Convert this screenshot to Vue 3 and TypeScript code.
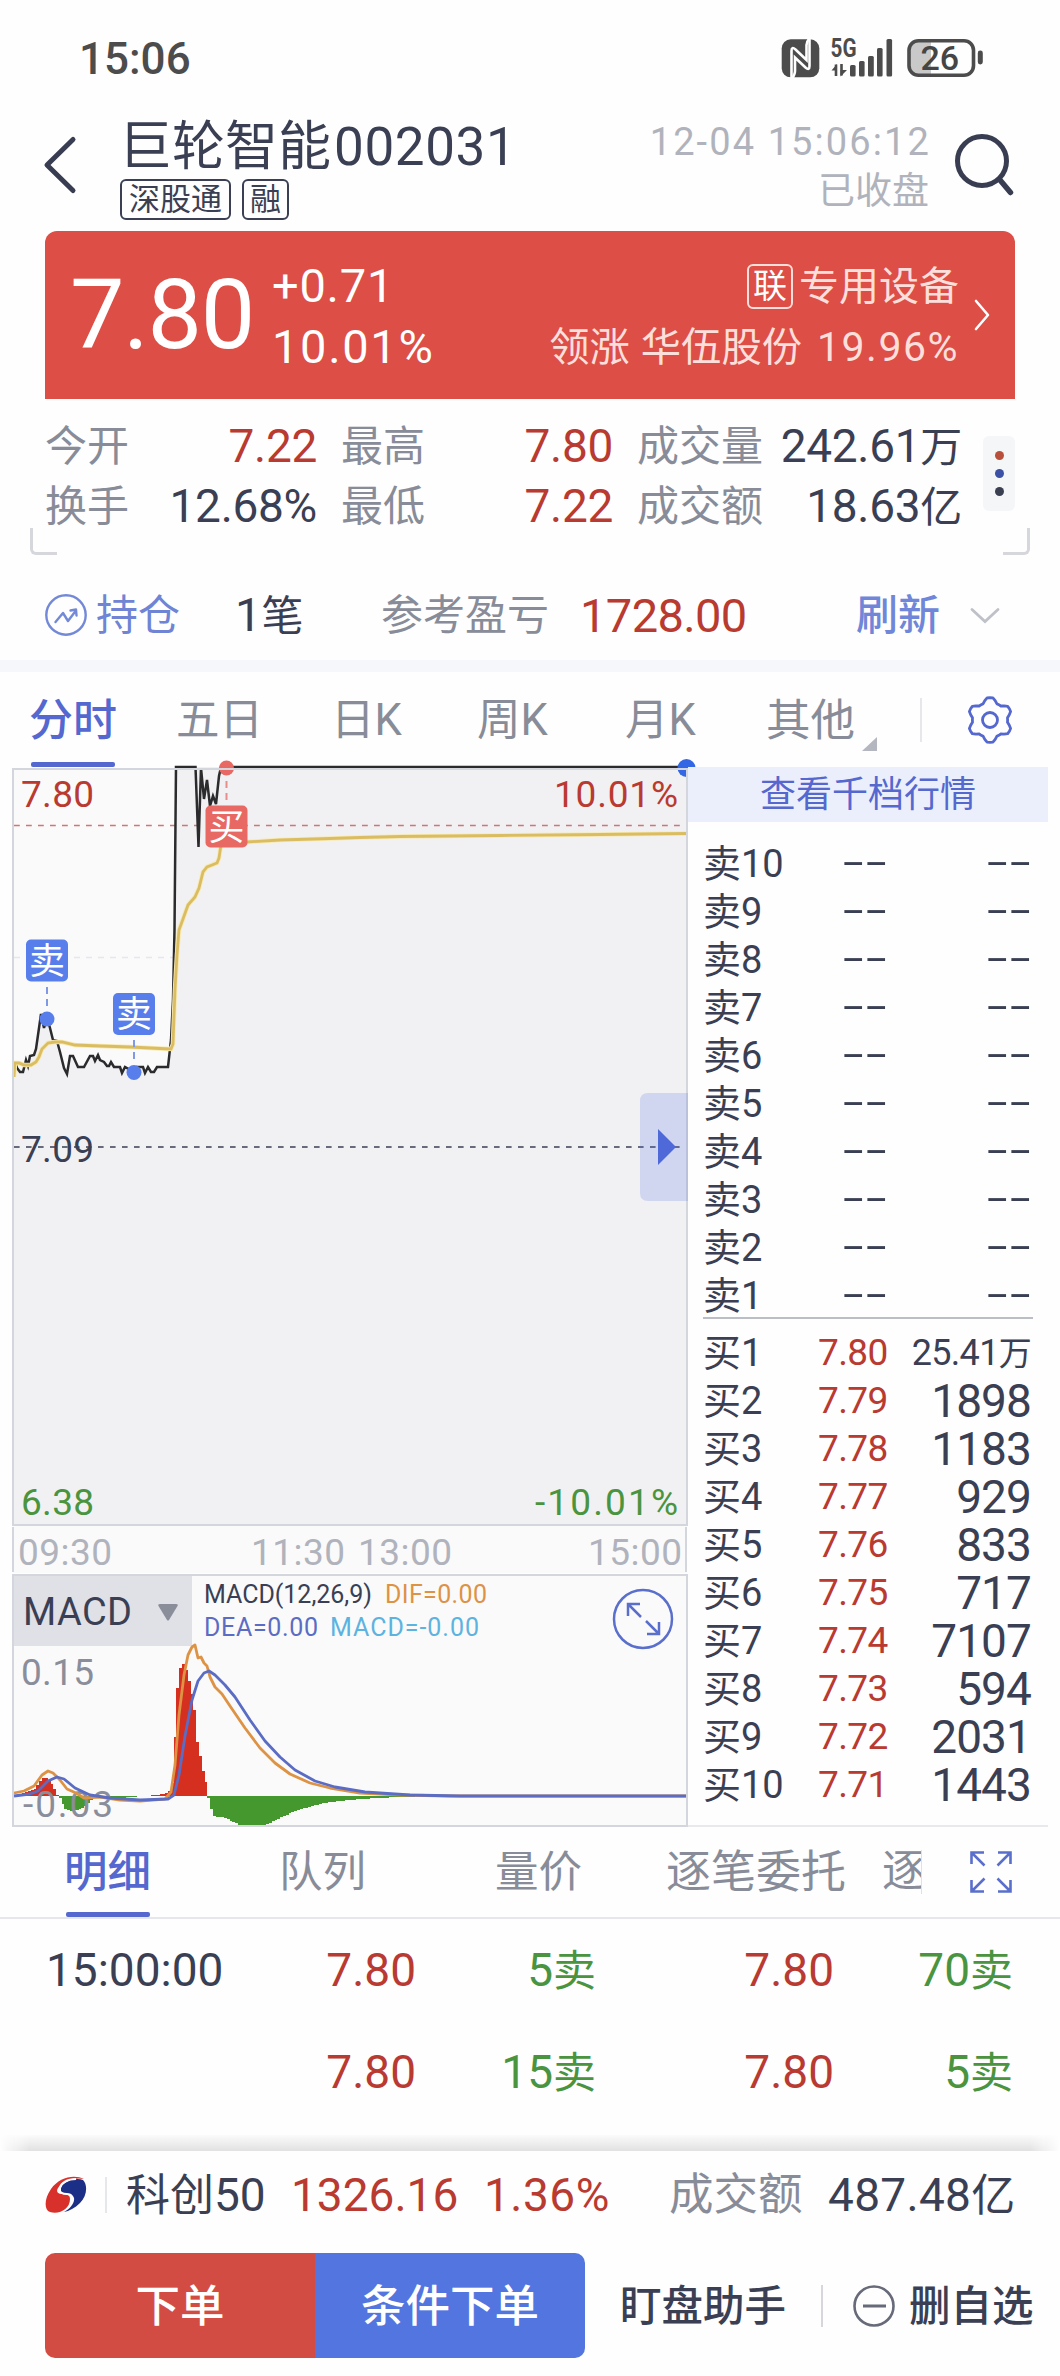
<script setup lang="ts">
interface Level { name: string; price: string; vol: string; small?: boolean }
interface Bar { x: number; y: number; h: number; up: boolean }

const sells: string[] = ['10', '9', '8', '7', '6', '5', '4', '3', '2', '1']
const buys: Level[] = [
  { name: '买1', price: '7.80', vol: '25.41', small: true },
  { name: '买2', price: '7.79', vol: '1898' },
  { name: '买3', price: '7.78', vol: '1183' },
  { name: '买4', price: '7.77', vol: '929' },
  { name: '买5', price: '7.76', vol: '833' },
  { name: '买6', price: '7.75', vol: '717' },
  { name: '买7', price: '7.74', vol: '7107' },
  { name: '买8', price: '7.73', vol: '594' },
  { name: '买9', price: '7.72', vol: '2031' },
  { name: '买10', price: '7.71', vol: '1443' },
]

const deals = [
  { time: '15:00:00', p1: '7.80', v1: '5', p2: '7.80', v2: '70' },
  { time: '', p1: '7.80', v1: '15', p2: '7.80', v2: '5' },
]

// intraday price and average price
const open =
  '14,1071 15,1062 17,1068 20,1072 23,1072 26,1060 28,1066 30,1056 34,1055 36,1049 38,1035 41,1014 44,1028 47,1018 50,1028 53,1040 57,1041 60,1052 64,1068 67,1074 70,1056 73,1056 78,1067 84,1067 90,1056 93,1056 95,1061 98,1055 100,1060 104,1062 107,1066 109,1066 111,1062 114,1067 120,1067 122,1073 125,1067 134,1072 137,1067 143,1067 145,1073 148,1067 151,1072 154,1072 157,1067 168,1067 171,1040 173,1000 174.5,930 176,767'
const price =
  open + ' 195.5,767 198.5,847 201,768 204,799 207,780 210,806 213,796 216,804 219,776 221,767 687,767'
const area = open + ' 687,767 687,1525 14,1525'
const average =
  '14,1077 15,1063 19,1063 24,1065 31,1065 36,1062 39,1057 42,1049 48,1043 55,1042 62,1042 75,1045 100,1046 130,1047 160,1048.5 171,1049 173,1044 175,990 177,955 179,930 183,919 188,905 195,897 199,888 203,872 207,867 212,865 217,863 219,858 221,845 232,842.5 247,842 280,840 330,838.5 360,837.5 400,836.5 500,835.5 600,834.5 686,833.5'

const dif =
  '14,1793 24,1791 34,1786 42,1775 48,1771 53,1773 60,1780 67,1789 76,1793 84,1798 100,1797 120,1800 140,1801 165,1799 171,1792 175,1765 179,1715 184,1675 188,1655 192,1647 195,1645 198,1658 201,1657 204,1663 207,1666 210,1677 215,1687 222,1694 230,1706 245,1728 260,1748 275,1763 290,1774 310,1783 330,1788 360,1793 400,1795 450,1796 686,1796'
const dea =
  '14,1796 30,1794 38,1791 48,1781 57,1777 64,1779 75,1788 90,1795 110,1798 140,1800 168,1799 174,1795 179,1775 185,1736 192,1700 198,1681 204,1673 209,1671 215,1675 225,1685 235,1697 250,1720 265,1741 280,1757 295,1770 315,1781 335,1787 365,1792 410,1795 460,1796 686,1796'

const ZERO = 1796
const STEP = 2.8
const hist: [number, number][] = [
  [14, 1796], [22, 1794], [30, 1791], [36, 1788], [40, 1782], [44, 1777], [48, 1778], [52, 1784], [56, 1792],
  [58, 1796], [61, 1799], [65, 1809], [70, 1811], [78, 1810], [86, 1806], [92, 1799], [98, 1797], [120, 1798],
  [138, 1796.5], [152, 1795.5], [162, 1794], [168, 1793], [171, 1788], [174, 1775], [175.6, 1714], [178.4, 1681],
  [181.2, 1665], [184, 1664], [186.8, 1672], [189.6, 1684], [192.4, 1697], [195.2, 1714], [198, 1750],
  [200.8, 1758], [203.6, 1775], [206.4, 1784], [208, 1796], [210, 1803], [212, 1811], [214.5, 1817],
  [222, 1817], [230, 1820], [240, 1825], [265, 1825], [278, 1819], [295, 1811], [312, 1806], [330, 1802],
  [360, 1799], [400, 1797], [430, 1796],
]
const bars: Bar[] = []
for (let x = 14; x < 430; x += STEP) {
  const c = x + STEP / 2
  const i = hist.findIndex((p) => p[0] > c)
  if (i < 1) continue
  const [x0, y0] = hist[i - 1]
  const [x1, y1] = hist[i]
  const y = y0 + ((y1 - y0) * (c - x0)) / (x1 - x0)
  bars.push({ x, y: Math.min(y, ZERO), h: Math.abs(y - ZERO), up: y < ZERO })
}

const gear = Array.from({ length: 49 }, (_, k) => {
  const a = (k / 48) * Math.PI * 2
  const r = 20 + 2.4 * Math.tanh(3 * Math.cos(6 * a))
  return `${(25 + r * Math.sin(a)).toFixed(1)},${(25 - r * Math.cos(a)).toFixed(1)}`
}).join(' ')
</script>

<template>
  <div class="page">
    <div class="status">
      <span class="clock">15:06</span>
      <svg class="sys" width="202" height="40" viewBox="781 38 202 40">
        <rect x="781.7" y="39.3" width="37.6" height="38" rx="9" fill="#4c4c4c" />
        <path d="M791.500 78.500V51q0-5 4-1.500l11 10.500V45q0-3 3-7" fill="none" stroke="#fff" stroke-width="2.600" />
        <path d="M809.500 38V66q0 5-4 1.500l-10.500-10V71q0 3-3 8" fill="none" stroke="#fff" stroke-width="2.600" />
        <text x="830.500" y="57" class="g5" textLength="26" lengthAdjust="spacingAndGlyphs">5G</text>
        <path d="M836 64.500v11.500M841.500 64v11.500" stroke="#4c4c4c" stroke-width="2.600" fill="none" />
        <path d="M831.500 70.500l5.500-6.500v6.500zM840.500 70h6.500l-6.500 6.500z" fill="#4c4c4c" />
        <g fill="#4c4c4c">
          <rect x="850" y="65" width="5.600" height="11.500" rx="1.500" />
          <rect x="859" y="61" width="5.600" height="15.500" rx="1.500" />
          <rect x="868" y="56" width="5.800" height="20.500" rx="1.500" />
          <rect x="877" y="48" width="5.600" height="28.500" rx="1.500" />
          <rect x="886.500" y="39" width="5.600" height="37.500" rx="1.500" />
        </g>
        <path d="M931 41h-13q-9 0-9 9v16q0 9 9 9h13z" fill="#c9c9c9" />
        <rect x="909" y="40.800" width="64.500" height="34.500" rx="9.500" fill="none" stroke="#4c4c4c" stroke-width="3.600" />
        <rect x="977.800" y="50.500" width="5" height="14" rx="2.400" fill="#4c4c4c" />
        <text x="920.500" y="70" class="bat" textLength="38.500">26</text>
      </svg>
    </div>

    <header class="head">
      <svg class="back" width="36" height="60" viewBox="0 0 36 60">
        <path d="M31 4.500L5 30l26 25.500" fill="none" stroke="#383d52" stroke-width="5" stroke-linecap="round" stroke-linejoin="round" />
      </svg>
      <div class="name">
        <div class="title"><span class="cn">巨轮智能</span><span>002031</span></div>
        <div class="tags"><span>深股通</span><span>融</span></div>
      </div>
      <div class="when">
        <div class="dt">12-04 15:06:12</div>
        <div class="closed">已收盘</div>
      </div>
      <svg class="search" width="62" height="64" viewBox="0 0 62 64">
        <circle cx="29" cy="29" r="24.500" fill="none" stroke="#383d52" stroke-width="5" />
        <path d="M47 48L57.500 60.500" stroke="#383d52" stroke-width="5.500" stroke-linecap="round" />
      </svg>
    </header>

    <section class="card">
      <div class="big">7.80</div>
      <div class="chg"><div>+0.71</div><div class="pc">10.01%</div></div>
      <div class="sector">
        <div class="l1"><span class="lian">联</span>专用设备</div>
        <div class="l2">领涨 华伍股份 <span class="spc">19.96%</span></div>
      </div>
      <svg class="go" width="18" height="32" viewBox="0 0 18 32">
        <path d="M3 2l12 14L3 30" fill="none" stroke="#fff" stroke-width="2.600" stroke-linecap="round" stroke-linejoin="round" />
      </svg>
    </section>

    <section class="stats">
      <div class="grid">
        <span class="k">今开</span><span class="v red">7.22</span>
        <span class="k">最高</span><span class="v red">7.80</span>
        <span class="k">成交量</span><span class="v">242.61<i>万</i></span>
        <span class="k">换手</span><span class="v">12.68%</span>
        <span class="k">最低</span><span class="v red">7.22</span>
        <span class="k">成交额</span><span class="v">18.63<i>亿</i></span>
      </div>
      <div class="more"><b class="d1"></b><b class="d2"></b><b class="d3"></b></div>
      <i class="corner cl"></i><i class="corner cr"></i>
    </section>

    <section class="hold">
      <svg width="44" height="44" viewBox="0 0 44 44" fill="none" stroke="#7389d8" stroke-width="2.400">
        <circle cx="22" cy="22" r="19.700" />
        <path d="M11.500 29l7.500-9 5 8 8-10.500M26.500 17.500l5.500-1 .5 6" stroke-linejoin="round" stroke-linecap="round" />
      </svg>
      <span class="hk">持仓</span>
      <span class="hn">1<i>笔</i></span>
      <span class="hp">参考盈亏</span>
      <span class="hv red">1728.00</span>
      <span class="hr">刷新</span>
      <svg class="hd" width="32" height="18" viewBox="0 0 32 18"><path d="M3 3.500l13 12 13-12" fill="none" stroke="#bfc1c9" stroke-width="2.800" stroke-linecap="round" /></svg>
    </section>
    <div class="band"></div>

    <nav class="tabs">
      <span class="t0 on">分时</span><span class="t1">五日</span><span class="t2">日K</span><span class="t3">周K</span>
      <span class="t4">月K</span><span class="t5">其他</span>
      <svg class="tri" width="15" height="14"><path d="M15 0v14H0z" fill="#b4b7bf" /></svg>
      <i class="sep"></i>
      <svg class="gear" width="50" height="50" viewBox="0 0 50 50" fill="none" stroke="#5468cf" stroke-width="2.800" stroke-linejoin="round">
        <polygon :points="gear" /><circle cx="25" cy="25" r="7.500" />
      </svg>
    </nav>

    <main class="main">
      <div class="left">
        <svg class="chart" width="688" height="807" viewBox="0 767 688 807">
          <rect x="13" y="769" width="674" height="756" fill="#fafafb" />
          <path d="M14 957.500H686" stroke="#e7e7ea" stroke-width="1.500" stroke-dasharray="6 6" />
          <polygon :points="area" fill="#f1f1f4" />
          <path d="M14 825.500H686" stroke="#d0766d" stroke-width="1.600" stroke-dasharray="5.800 6.200" />
          <polyline :points="price" fill="none" stroke="#2b2b2d" stroke-width="2.500" />
          <polyline :points="average" fill="none" stroke="#f8e9b0" stroke-width="4.600" />
          <polyline :points="average" fill="none" stroke="#dabd62" stroke-width="2.800" />
          <path d="M14 1147H686" stroke="#676a7b" stroke-width="2" stroke-dasharray="5.600 6.400" />

          <circle cx="226.500" cy="768" r="7.500" fill="#e86963" />
          <circle cx="686.500" cy="768" r="9" fill="#3467e4" />
          <rect x="13" y="769" width="674" height="756" fill="none" stroke="#d4d6dd" stroke-width="2" />

          <path d="M226.500 781v20" stroke="#e88d89" stroke-width="2" stroke-dasharray="7 5" />
          <rect x="205.500" y="805.500" width="42" height="42" rx="5" fill="#e86963" />
          <text x="226.500" y="839.500" class="mk">买</text>
          <circle cx="47" cy="1019" r="7.500" fill="#587eec" />
          <path d="M47 987v20" stroke="#7f99e6" stroke-width="2" stroke-dasharray="7 5" />
          <rect x="26" y="939.500" width="42" height="42" rx="5" fill="#587eec" />
          <text x="47" y="973.500" class="mk">卖</text>
          <circle cx="134" cy="1072.500" r="7.500" fill="#587eec" />
          <path d="M134 1040v20" stroke="#7f99e6" stroke-width="2" stroke-dasharray="7 5" />
          <rect x="113" y="993" width="42" height="42" rx="5" fill="#587eec" />
          <text x="134" y="1027" class="mk">卖</text>

          <g class="lb">
            <text x="21" y="806.500" fill="#b93a30" textLength="73">7.80</text>
            <text x="554" y="806.500" fill="#b93a30" textLength="124">10.01%</text>
            <text x="21" y="1161.500" fill="#3a3f54" textLength="73">7.09</text>
            <text x="21" y="1515" fill="#4a9440" textLength="73">6.38</text>
            <text x="535" y="1515" fill="#4a9440" textLength="143">-10.01%</text>
          </g>
          <path d="M688 1093h-40q-8 0-8 8v92q0 8 8 8h40z" fill="#5470e0" fill-opacity=".2" />
          <path d="M658 1129l18 18-18 18z" fill="#5069d8" />

          <rect x="13" y="1526" width="674" height="47" fill="#fafafb" />
          <path d="M13 1527v45M686 1527v45" stroke="#d4d6dd" stroke-width="2" />
          <g class="lb" fill="#b0b3bc">
            <text x="18" y="1565" textLength="94">09:30</text>
            <text x="251" y="1565" textLength="94">11:30</text>
            <text x="358" y="1565" textLength="94">13:00</text>
            <text x="588" y="1565" textLength="94">15:00</text>
          </g>
        </svg>
        <svg class="macd" width="688" height="253" viewBox="0 1574 688 253">
          <rect x="13" y="1575" width="674" height="251" fill="#fafafb" />
          <rect x="14" y="1576" width="178" height="70" fill="#e0e1e6" />
          <g shape-rendering="crispEdges">
            <rect v-for="b in bars" :key="b.x" :x="b.x" :y="b.y" width="3" :height="b.h" :fill="b.up ? '#d52f20' : '#45982d'" />
          </g>
          <text x="23" y="1817" class="mt" textLength="90">-0.03</text>
          <polyline :points="dif" fill="none" stroke="#dd9244" stroke-width="2.800" stroke-linejoin="round" />
          <polyline :points="dea" fill="none" stroke="#5a6cc4" stroke-width="2.800" stroke-linejoin="round" />
          <text x="21" y="1685" class="mt" textLength="73">0.15</text>
          <text x="23" y="1625" class="sel" textLength="109">MACD</text>
          <path d="M160 1604h16q2.500 0 1.500 2l-8.500 14q-1 1-2 0l-8.500-14q-1-2 1.500-2z" fill="#8a8d9a" />
          <g class="lg">
            <text x="204" y="1603" fill="#3a3f54" textLength="168">MACD(12,26,9)</text>
            <text x="385" y="1603" fill="#dd9244" textLength="102">DIF=0.00</text>
            <text x="204" y="1636" fill="#5a6cc4" textLength="114">DEA=0.00</text>
            <text x="330" y="1636" fill="#5db3e0" textLength="149">MACD=-0.00</text>
          </g>
          <g fill="none" stroke="#5a6fcb" stroke-width="2.500">
            <circle cx="643" cy="1619" r="29" />
            <path d="M641 1617L628.500 1604.500M640 1604H628v12M646 1621l12 12M647 1634h12v-12" />
          </g>
          <rect x="13" y="1575" width="674" height="251" fill="none" stroke="#d4d6dd" stroke-width="2" />
        </svg>
      </div>
      <div class="book">
        <div class="bh">查看千档行情</div>
        <div class="sells">
          <div v-for="s in sells" :key="s" class="brow">
            <span class="bn">卖{{ s }}</span><span class="dash a"><em>--</em></span><span class="dash"><em>--</em></span>
          </div>
        </div>
        <div class="buys">
          <div v-for="b in buys" :key="b.name" class="brow">
            <span class="bn">{{ b.name }}</span><span class="bp red">{{ b.price }}</span>
            <span class="bv" :class="{ sm: b.small }">{{ b.vol }}<i v-if="b.small">万</i></span>
          </div>
        </div>
      </div>
    </main>

    <nav class="tabs2">
      <span class="s0 on">明细</span><span class="s1">队列</span><span class="s2">量价</span>
      <span class="s3">逐笔委托</span><span class="s4">逐</span>
      <svg class="exp" width="44" height="44" viewBox="0 0 44 44" fill="none" stroke="#5a6fcb" stroke-width="2.600">
        <path d="M15 2.500H2.500V14M2.500 2.500l13 13M29 2.500h12.500V14M41.500 2.500l-13 13M15 41.500H2.500V30M2.500 41.500l13-13M29 41.500h12.500V30M41.500 41.500l-13-13" />
      </svg>
    </nav>

    <section class="deals">
      <div v-for="(d, i) in deals" :key="i" class="deal">
        <span class="tm">{{ d.time }}</span>
        <span class="red">{{ d.p1 }}</span>
        <span class="grn">{{ d.v1 }}<i>卖</i></span>
        <span class="red">{{ d.p2 }}</span>
        <span class="grn">{{ d.v2 }}<i>卖</i></span>
      </div>
    </section>
    <div class="shade"></div>

    <footer>
      <div class="index">
        <svg width="42" height="38" viewBox="0 0 42 38">
          <path d="M39 3C28-2 14 2 6 13-1 23-1 34 5 36c9 3 20-3 20-13 0-5-5-5-8-5-5 0-6-3-4-6C17 5 29 1 39 3z" fill="#d8302a" />
          <path d="M38 4c5 5 4 16-3 23-5 5-11 8-16 9 6-3 11-9 10-14-1-4-5-3-9-4-4 0-7-3-4-7C20 5 31 1 38 4z" fill="#1c2f86" />
          <path d="M31 3c-9 0-15 4-16 9-1 5 3 6 7 6 5 0 6 3 4 8" fill="none" stroke="#fff" stroke-width="2" />
        </svg>
        <i class="isep"></i>
        <span class="in"><i>科创</i>50</span>
        <span class="iv red">1326.16</span>
        <span class="ip red">1.36%</span>
        <span class="ik">成交额</span>
        <span class="ia">487.48<i>亿</i></span>
      </div>
      <div class="acts">
        <div class="btn r">下单</div><div class="btn b">条件下单</div>
        <span class="help">盯盘助手</span>
        <i class="asep"></i>
        <svg width="44" height="44" viewBox="0 0 44 44" fill="none" stroke="#666a79" stroke-width="2.600"><circle cx="22" cy="22" r="19.500" /><path d="M11 22h23" stroke-width="3" /></svg>
        <span class="del">删自选</span>
      </div>
    </footer>
  </div>
</template>

<style>
body { margin: 0; background: #fff; }
</style>

<style scoped>
.page { width: 1060px; height: 2376px; overflow: hidden; background: #fefefe; color: #3a3f54; font-family: Roboto, "Noto Sans CJK SC", sans-serif; font-size: 46px; line-height: 1; }
.page * { box-sizing: border-box; }
.page span, .page div { white-space: nowrap; }
i, em { font-style: normal; }
svg { display: block; flex: none; }
.red { color: #b93a30; }
.grn { color: #4a9440; }
.status { height: 116px; display: flex; justify-content: space-between; align-items: center; padding: 0 77px 0 79px; color: #4c4c4c; }
.sys { overflow: visible; }
.clock { font-size: 44px; font-weight: 500; padding-top: 2px; }
.g5 { font-size: 25px; font-weight: 700; fill: #4c4c4c; }
.bat { font-size: 34px; font-weight: 500; fill: #454545; }

.head { height: 115px; display: flex; padding-left: 42px; }
.back { margin-top: 19px; }
.name { width: 420px; margin-left: 42px; }
.title { height: 60px; line-height: 63px; font-size: 53px; letter-spacing: .6px; margin-left: -1px; }
.title .cn { letter-spacing: 0; margin-right: 3px; }
.tags { display: flex; gap: 11px; margin-top: 3px; }
.tags span { height: 41px; border: 2px solid #3a3f54; border-radius: 6px; padding: 0 7px; font-size: 31px; line-height: 38px; }
.tags span + span { padding: 0 6px; }
.when { flex: 1; text-align: right; color: #b0b3bc; }
.dt { font-size: 38px; line-height: 52px; letter-spacing: 2.100px; margin-right: -2px; }
.closed { font-size: 37px; line-height: 48px; }
.search { margin: 16px 45px 0 24px; }

.card { margin: 0 45px; height: 168px; background: #dc4e46; border-radius: 12px 12px 0 0; display: flex; align-items: center; color: #fff; }
.big { font-size: 97px; margin-left: 25px; letter-spacing: -1.300px; line-height: 170px; }
.chg { margin-left: 18px; font-size: 47px; line-height: 61px; padding-top: 1px; letter-spacing: .8px; }
.chg .pc { letter-spacing: 1.700px; }
.sector { flex: 1; display: flex; flex-direction: column; align-items: flex-end; font-size: 40px; line-height: 61px; color: #fcdedb; padding-top: 3px; }
.l2 { word-spacing: 1px; font-size: 40.300px; }
.l1 { display: flex; align-items: center; }
.lian { width: 46px; height: 45px; border: 2px solid #fcdedb; border-radius: 6px; font-size: 34px; line-height: 41px; text-align: center; color: #fff; margin-right: 6px; }
.spc { letter-spacing: 1.500px; margin-left: 4px; font-size: 41px; }
.go { margin: 0 24px 0 14px; }

.stats { height: 171px; position: relative; padding-top: 17px; }
.grid { display: grid; grid-template-columns: 83px 189px 107px 189px 149px 200px; margin-left: 45px; grid-auto-rows: 60px; line-height: 60px; }
.k { font-size: 42px; color: #888c99; padding-left: 24px; line-height: 62px; }
.k:nth-child(6n + 1) { padding-left: 0; }
.v { text-align: right; letter-spacing: -.3px; }
.v i, .hn i { font-size: 42px; }
.more { position: absolute; left: 983px; top: 37px; width: 32px; height: 75px; border-radius: 6px; background: #f5f6f8; display: flex; flex-direction: column; align-items: center; justify-content: center; gap: 9px; }
.more b { width: 9px; height: 9px; border-radius: 50%; }
.d1 { background: #b9503b; } .d2 { background: #3c50a5; } .d3 { background: #3a3f52; }
.corner { position: absolute; top: 129px; width: 27px; height: 27px; border-bottom: 3px solid #d5d7dd; }
.cl { left: 30px; border-left: 3px solid #d5d7dd; border-radius: 0 0 0 6px; }
.cr { right: 30px; border-right: 3px solid #d5d7dd; border-radius: 0 0 6px 0; }

.hold { height: 90px; display: flex; align-items: center; padding-left: 44px; line-height: 90px; font-size: 42px; }
.hold span { padding-top: 1px; }
.hk { margin-left: 8px; width: 139px; color: #6f84d5; }
.hn { font-size: 47px; width: 146px; }
.hp { color: #888c99; width: 199px; }
.hv { font-size: 47px; letter-spacing: -.6px; width: 276px; }
.hr { color: #7086d8; font-weight: 500; width: 113px; }
.band { height: 12px; background: #f6f7fa; }

.tabs { height: 95px; display: flex; position: relative; line-height: 98px; font-size: 43.500px; color: #888c99; padding-left: 29px; }
.on { color: #5468cf; font-weight: 500; position: relative; }
.on::after { content: ""; position: absolute; left: 2px; right: 2px; bottom: 0; height: 5px; border-radius: 2px; background: #5468cf; }
.t0 { font-size: 44px; width: 88px; margin-right: 59px; }
.t1 { width: 155px; } .t2 { width: 146px; } .t3 { width: 148px; } .t4 { width: 141px; } .t5 { font-size: 44.500px; width: 96px; }
.tri { margin-top: 65px; }
.sep { width: 2px; height: 44px; margin: 26px 43px 0 43px; background: #e6e7eb; }
.gear { margin-top: 23px; }

.main { height: 1060px; display: flex; }
.left { width: 688px; flex: none; }
.chart { overflow: visible; }
.lb { font-size: 37px; }
.mk { font-size: 36px; fill: #fff; text-anchor: middle; }
.mt { font-size: 37px; fill: #8a8d9a; }
.sel { font-size: 38px; fill: #3a3f54; }
.lg { font-size: 25px; }
.book { width: 360px; border-bottom: 2px solid #e8e9ec; }
.bh { height: 55px; line-height: 56px; background: #ebeffb; text-align: center; font-size: 36px; color: #5468cf; }
.sells { margin: 18px 15px 0; height: 479px; border-bottom: 2px solid #bcbec5; }
.buys { margin: 10px 17px 0 15px; }
.brow { display: flex; align-items: center; height: 48px; line-height: 48px; }
.bn { width: 115px; font-size: 38px; flex: none; }
.dash { width: 44px; flex: none; display: flex; }
.dash.a { margin-left: 25px; width: 144px; }
.dash em { display: inline-block; font-size: 38px; transform: translateY(-2px) scaleX(1.95); transform-origin: 0 50%; letter-spacing: 1.300px; }
.bp { font-size: 37px; width: 72px; letter-spacing: -.6px; }
.bv { flex: 1; text-align: right; letter-spacing: -.9px; }
.bv.sm { font-size: 36px; letter-spacing: -.7px; } .bv i { font-size: 33px; }

.tabs2 { height: 92px; display: flex; line-height: 92px; font-size: 43.500px; color: #888c99; padding-left: 64px; border-bottom: 2px solid #e6e7ea; }
.s0 { width: 87px; margin-right: 128px; height: 90px; }
.s0::after { left: 2px; right: 1px; }
.s1, .s2 { width: 216px; } .s2 { width: 171px; }
.s3 { width: 216px; font-size: 45px; }
.s4 { width: 40px; height: 44px; line-height: 44px; margin-top: 23px; overflow: hidden; border-right: 1px solid #dfe1e6; }
.exp { margin: 23px 0 0 47px; }

.deals { height: 216px; }
.deal { height: 102px; line-height: 103px; display: grid; grid-template-columns: 232px 138px 180px 238px 179px; padding-left: 46px; }
.deal span { text-align: right; }
.deal .tm { text-align: left; }
.deal i { font-size: 43px; }
.shade { height: 16px; background: linear-gradient(#fbfbfb, #e1e1e1); -webkit-mask-image: linear-gradient(90deg, transparent, #000 30px, #000 1030px, transparent); mask-image: linear-gradient(90deg, transparent, #000 30px, #000 1030px, transparent); }

footer { height: 225px; background: #fefefe; }
.index { height: 102px; display: flex; align-items: center; line-height: 86px; padding: 0 0 14px 45px; }
.isep { width: 2px; height: 36px; margin: 0 19px 0 18px; background: #e6e7eb; }
.in { width: 165px; } .in i { font-size: 44px; }
.iv { width: 193px; } .ip { width: 185px; letter-spacing: .5px; }
.ik { font-size: 44.500px; color: #888c99; width: 159px; }
.ia { letter-spacing: .3px; }
.ia i { font-size: 44px; }
.acts { height: 105px; display: flex; align-items: center; padding-left: 45px; line-height: 109px; font-size: 41.500px; }
.btn { width: 270px; height: 105px; color: #fff; text-align: center; font-size: 44.500px; font-weight: 500; }
.btn.r { background: #d34c43; border-radius: 10px 0 0 10px; }
.btn.b { background: #5275df; border-radius: 0 10px 10px 0; }
.help { margin-left: 35px; width: 201px; font-weight: 500; padding-top: 1px; }
.asep { width: 2px; height: 42px; background: #d5d7dd; margin-right: 29px; }
.del { margin-left: 13px; font-weight: 500; padding-top: 1px; }
</style>
